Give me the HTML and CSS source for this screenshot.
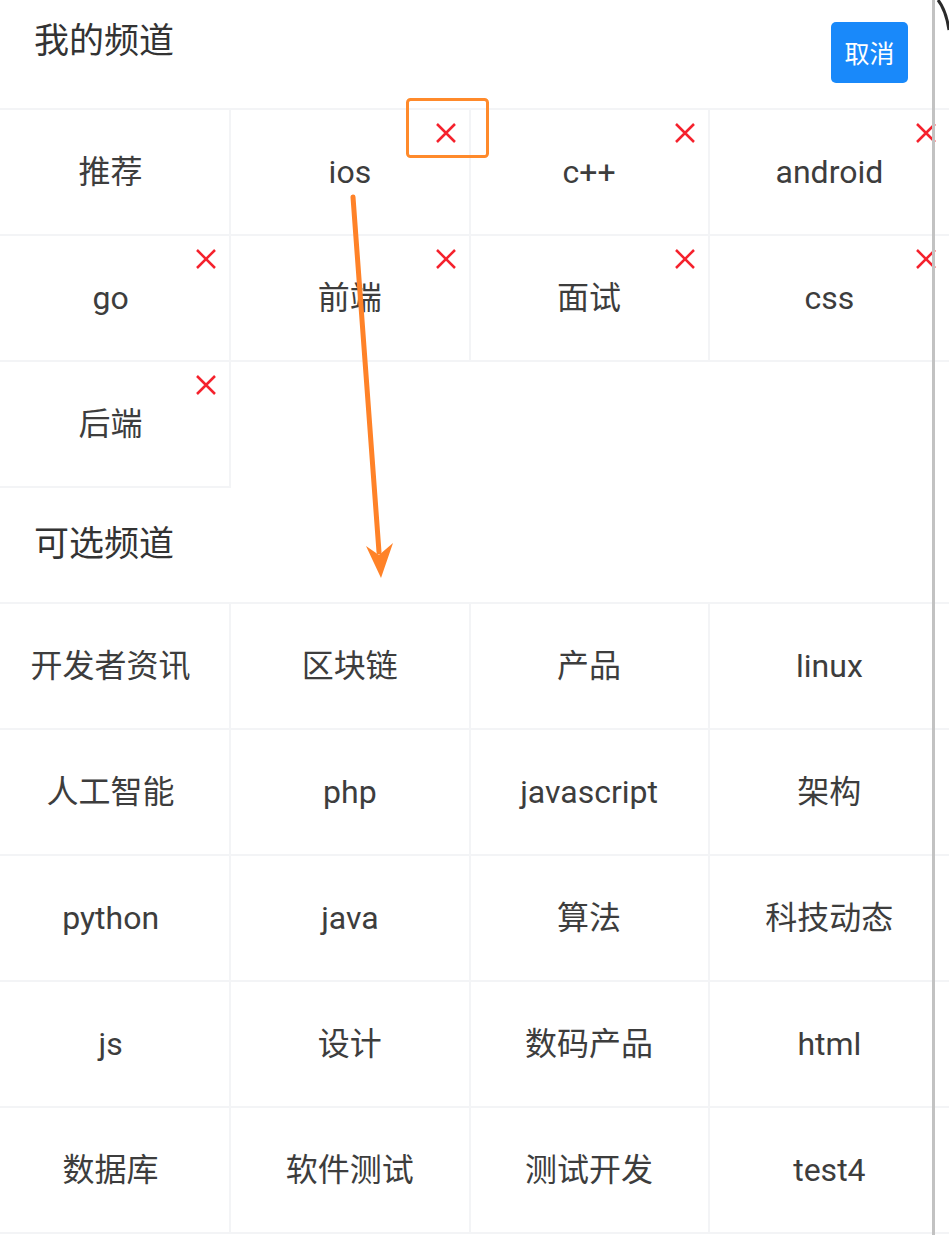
FILE: index.html
```html
<!DOCTYPE html>
<html lang="zh-CN">
<head>
<meta charset="utf-8">
<title>频道编辑</title>
<link rel="stylesheet" href="styles.css">
</head>
<body>
<div class="panel">
  <div class="section-head head-top">
    <div class="section-title">我的频道</div>
    <button class="btn-cancel">取消</button>
  </div>
  <div class="grid">
    <div class="cell"><span class="label">推荐</span></div>
    <div class="cell"><span class="label">ios</span><svg class="del" viewBox="0 0 24 24"><path d="M3 3L21 21M21 3L3 21"/></svg></div>
    <div class="cell"><span class="label">c++</span><svg class="del" viewBox="0 0 24 24"><path d="M3 3L21 21M21 3L3 21"/></svg></div>
    <div class="cell"><span class="label">android</span><svg class="del" viewBox="0 0 24 24"><path d="M3 3L21 21M21 3L3 21"/></svg></div>
    <div class="cell"><span class="label">go</span><svg class="del" viewBox="0 0 24 24"><path d="M3 3L21 21M21 3L3 21"/></svg></div>
    <div class="cell"><span class="label">前端</span><svg class="del" viewBox="0 0 24 24"><path d="M3 3L21 21M21 3L3 21"/></svg></div>
    <div class="cell"><span class="label">面试</span><svg class="del" viewBox="0 0 24 24"><path d="M3 3L21 21M21 3L3 21"/></svg></div>
    <div class="cell"><span class="label">css</span><svg class="del" viewBox="0 0 24 24"><path d="M3 3L21 21M21 3L3 21"/></svg></div>
    <div class="cell"><span class="label">后端</span><svg class="del" viewBox="0 0 24 24"><path d="M3 3L21 21M21 3L3 21"/></svg></div>
  </div>
  <div class="section-head head-mid">
    <div class="section-title">可选频道</div>
  </div>
  <div class="grid">
    <div class="cell"><span class="label">开发者资讯</span></div>
    <div class="cell"><span class="label">区块链</span></div>
    <div class="cell"><span class="label">产品</span></div>
    <div class="cell"><span class="label">linux</span></div>
    <div class="cell"><span class="label">人工智能</span></div>
    <div class="cell"><span class="label">php</span></div>
    <div class="cell"><span class="label">javascript</span></div>
    <div class="cell"><span class="label">架构</span></div>
    <div class="cell"><span class="label">python</span></div>
    <div class="cell"><span class="label">java</span></div>
    <div class="cell"><span class="label">算法</span></div>
    <div class="cell"><span class="label">科技动态</span></div>
    <div class="cell"><span class="label">js</span></div>
    <div class="cell"><span class="label">设计</span></div>
    <div class="cell"><span class="label">数码产品</span></div>
    <div class="cell"><span class="label">html</span></div>
    <div class="cell"><span class="label">数据库</span></div>
    <div class="cell"><span class="label">软件测试</span></div>
    <div class="cell"><span class="label">测试开发</span></div>
    <div class="cell"><span class="label">test4</span></div>
  </div>
</div>
<div class="edge-line"></div>
<svg class="annot" viewBox="0 0 949 1235" width="949" height="1235">
  <path class="frame-corner" d="M938 0 Q946 10 949 30"/>
  <rect class="mark-box" x="407.5" y="99.5" width="80" height="57" rx="3"/>
  <path class="arrow-shaft" d="M353 197 L379 552"/>
  <polygon class="arrow-head" points="366,546 379,555 393,543 381,578"/>
</svg>
</body>
</html>
```
FILE: styles.css
```css
html, body {
  margin: 0;
  padding: 0;
  background: #ffffff;
}
body {
  width: 949px;
  height: 1235px;
  overflow: hidden;
  position: relative;
  font-family: Roboto, "Noto Sans CJK SC", "Noto Sans", sans-serif;
  color: #333333;
}
.panel {
  margin-left: -8px;
  width: 957px;
}
.section-head {
  display: flex;
  justify-content: space-between;
  box-sizing: border-box;
  padding: 0 41px 0 42px;
}
.head-top {
  height: 108px;
  align-items: flex-start;
  padding-top: 22px;
}
.head-mid {
  height: 114px;
  align-items: center;
}
.section-title {
  font-size: 35px;
  line-height: 40px;
  color: #333333;
}
.btn-cancel {
  width: 77px;
  height: 61px;
  border: none;
  border-radius: 5px;
  background: #1989fa;
  color: #ffffff;
  font-family: "Noto Sans CJK SC", sans-serif;
  font-size: 25px;
  padding: 0;
  line-height: 61px;
}
.grid {
  display: grid;
  grid-template-columns: repeat(4, 1fr);
  border-top: 2px solid #f3f4f6;
}
.cell {
  position: relative;
  box-sizing: border-box;
  height: 126px;
  border-right: 2px solid #f3f4f6;
  border-bottom: 2px solid #f3f4f6;
  display: flex;
  align-items: center;
  justify-content: center;
}
.cell:nth-child(4n) {
  border-right: none;
}
.label {
  font-size: 32px;
  line-height: 40px;
  color: #3d3d3d;
}
.del {
  position: absolute;
  top: 11px;
  right: 11px;
  width: 24px;
  height: 24px;
}
.del path {
  stroke: #f5222d;
  stroke-width: 2.5;
  fill: none;
}
.edge-line {
  position: absolute;
  top: 0;
  left: 932px;
  width: 3px;
  height: 1235px;
  background: #c2c2c2;
}
.annot {
  position: absolute;
  left: 0;
  top: 0;
  pointer-events: none;
}
.frame-corner {
  fill: none;
  stroke: #2a2a2a;
  stroke-width: 3;
}
.mark-box {
  fill: none;
  stroke: #ff8a2b;
  stroke-width: 3;
}
.arrow-shaft {
  stroke: #ff8228;
  stroke-width: 5;
  stroke-linecap: round;
  fill: none;
}
.arrow-head {
  fill: #ff8228;
}
```
